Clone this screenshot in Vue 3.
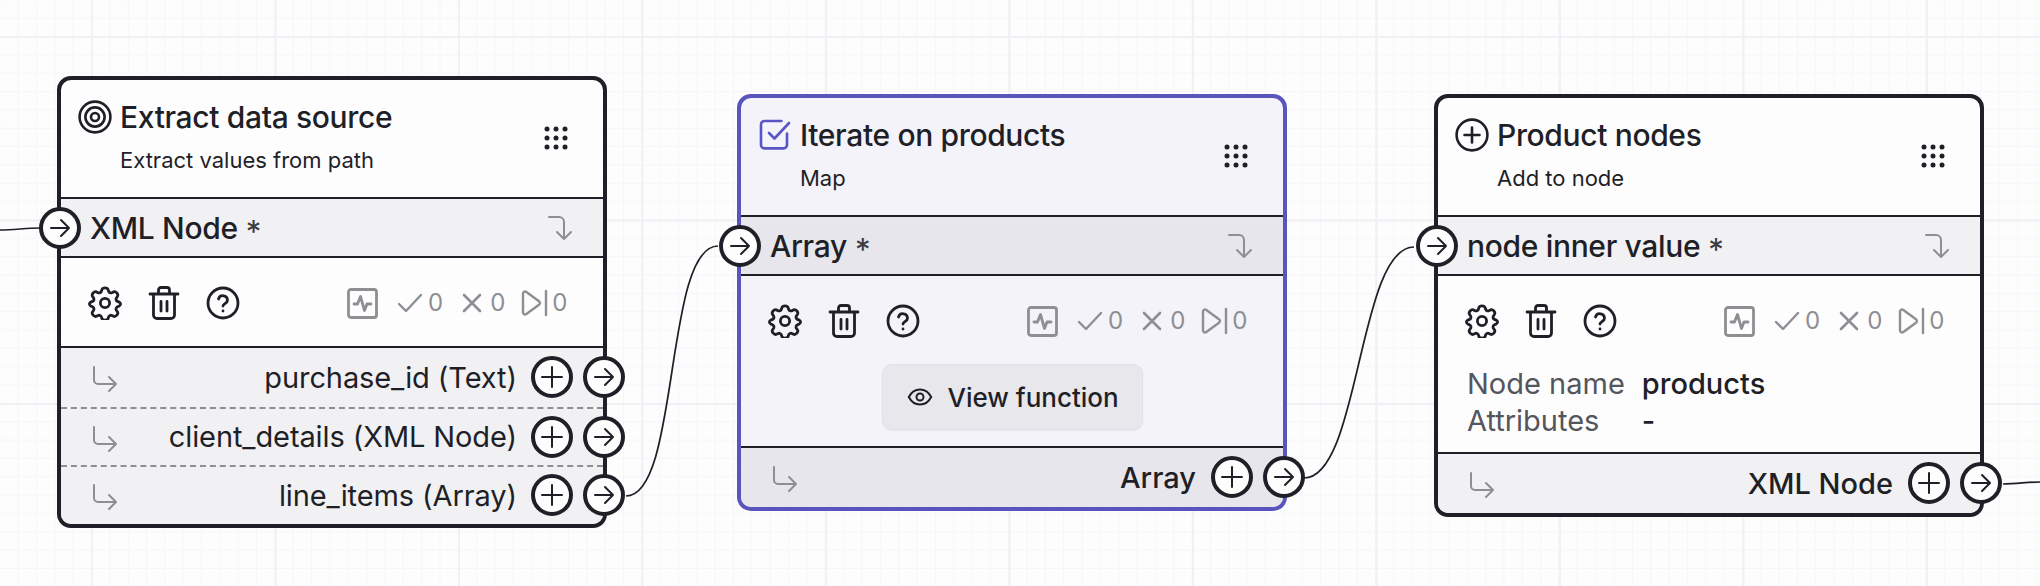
<template>
  <div class="canvas">
    <svg class="edges" width="2040" height="586" fill="none" stroke="#1f1f27" stroke-width="1.7">
      <path d="M0 230C14 230 26 228 40 228" />
      <path d="M626 496C680 496 664 246 718 246" />
      <path d="M1304 478C1360 478 1358 247 1414 247" />
      <path d="M2003 484C2016 484 2028 482 2040 482" />
    </svg>

    <article
      v-for="node in nodes"
      :key="node.title"
      class="node"
      :class="{ selected: node.selected }"
      :style="{ left: node.x + 'px', top: node.y + 'px' }"
    >
      <header class="node-head">
        <span class="type-icon">
          <svg v-if="node.icon === 'target'" width="34" height="34" viewBox="0 0 34 34" fill="none" stroke="#1f1f27" stroke-width="2.6">
            <circle cx="17" cy="17" r="15.4" />
            <circle cx="17" cy="17" r="9.6" />
            <circle cx="17" cy="17" r="4" />
          </svg>
          <svg v-else-if="node.icon === 'check'" width="34" height="34" viewBox="0 0 34 34" fill="none" stroke="#5a55c4" stroke-width="2.6" stroke-linecap="round" stroke-linejoin="round">
            <path d="M29 15.5V27a3.4 3.4 0 0 1-3.4 3.4H6.4A3.4 3.4 0 0 1 3 27V6.4A3.4 3.4 0 0 1 6.4 3h17" />
            <path d="M11 15l5.5 5.5L31 5" />
          </svg>
          <svg v-else width="34" height="34" viewBox="0 0 34 34" fill="none" stroke="#1f1f27" stroke-width="2.6" stroke-linecap="round">
            <circle cx="17" cy="17" r="15.4" />
            <path d="M17 9.5v15M9.5 17h15" />
          </svg>
        </span>
        <div class="head-text">
          <h2>{{ node.title }}</h2>
          <p>{{ node.subtitle }}</p>
        </div>
        <svg class="grip" width="26" height="26" viewBox="0 0 26 26" fill="#1f1f27">
          <template v-for="cy in [4, 13, 22]" :key="cy">
            <circle v-for="cx in [4, 13, 22]" :key="cx" :cx="cx" :cy="cy" r="2.5" />
          </template>
        </svg>
      </header>

      <div class="input-row">
        <span class="port in-port">
          <svg width="26" height="26" viewBox="0 0 26 26" fill="none" stroke="#1f1f27" stroke-width="2" stroke-linecap="round" stroke-linejoin="round"><path d="M4 13h18M14 5l8 8-8 8" /></svg>
        </span>
        <span class="input-name">{{ node.input }}</span>
        <span class="required">*</span>
        <svg class="elbow" width="28" height="28" viewBox="0 0 28 28" fill="none" stroke="#8e8e93" stroke-width="2" stroke-linecap="round" stroke-linejoin="round"><path d="M3 3h10a5 5 0 0 1 5 5v17M11 18l7 7 7-7" /></svg>
      </div>

      <div class="body">
        <div class="toolbar">
          <svg class="tool" width="34" height="34" viewBox="0 0 34 34" fill="none" stroke="#1f1f27" stroke-width="2.8" stroke-linecap="round" stroke-linejoin="round">
            <path d="M13.900 3.600c.8-2.400 5.400-2.400 6.200 0l.5 1.700a2.400 2.400 0 0 0 3.300 1.400l1.600-.8c2.300-1 5.400 2.400 3.900 4.600l-1 1.500a2.400 2.400 0 0 0 1.100 3.400l1.600.7c2 1 2 3 0 4l-1.600.7a2.400 2.400 0 0 0-1.100 3.400l1 1.500c1.500 2.200-1.600 5.600-3.900 4.600l-1.600-.8a2.400 2.400 0 0 0-3.300 1.400l-.5 1.700c-.8 2-5.400 2-6.200 0l-.5-1.700a2.400 2.400 0 0 0-3.300-1.400l-1.600.8c-2.300 1-5.400-2.400-3.900-4.600l1-1.500a2.400 2.400 0 0 0-1.100-3.400l-1.600-.7c-2-1-2-3 0-4l1.600-.7a2.400 2.400 0 0 0 1.100-3.400l-1-1.500c-1.500-2.200 1.600-5.600 3.900-4.600l1.600.8a2.400 2.400 0 0 0 3.300-1.400z" />
            <circle cx="17" cy="17" r="4.600" />
          </svg>
          <svg class="tool" width="34" height="34" viewBox="0 0 34 34" fill="none" stroke="#1f1f27" stroke-width="2.800" stroke-linecap="round" stroke-linejoin="round">
            <path d="M3 8h28M6.500 8v21a3.500 3.500 0 0 0 3.500 3.500h14a3.500 3.500 0 0 0 3.500-3.500V8M11.500 8V4a2.500 2.500 0 0 1 2.500-2.500h6A2.500 2.500 0 0 1 22.500 4v4M14 15.500v9.500M20 15.500v9.500" />
          </svg>
          <svg class="tool" width="34" height="34" viewBox="0 0 34 34" fill="none" stroke="#1f1f27" stroke-width="2.800" stroke-linecap="round" stroke-linejoin="round">
            <circle cx="17" cy="17" r="15" />
            <path d="M12.500 13a4.600 4.600 0 0 1 9 1.200c0 3-4.500 3.600-4.500 5.800M17 25v.1" />
          </svg>
          <div class="stats">
            <svg class="stat-pulse" width="31" height="31" viewBox="0 0 31 31" fill="none" stroke="#8e8e93" stroke-width="2.8" stroke-linecap="round" stroke-linejoin="round">
              <rect x="1.5" y="1.5" width="28" height="28" rx="2.5" />
              <path d="M7 16h3.500l3-7.500 4 14 2.500-6.500h4" />
            </svg>
            <svg class="stat-icon check-icon" width="28" height="22" viewBox="0 0 28 22" fill="none" stroke="#8e8e93" stroke-width="2.400" stroke-linecap="round" stroke-linejoin="round"><path d="M3 12l7 7L25 3" /></svg>
            <span class="count">0</span>
            <svg class="stat-icon x-icon" width="22" height="22" viewBox="0 0 22 22" fill="none" stroke="#8e8e93" stroke-width="2.600" stroke-linecap="round"><path d="M3 3l16 16M19 3L3 19" /></svg>
            <span class="count wide">0</span>
            <svg class="stat-icon play-icon" width="27" height="28" viewBox="0 0 27 28" fill="none" stroke="#8e8e93" stroke-width="2.400" stroke-linecap="round" stroke-linejoin="round"><path d="M2 4.500a2 2 0 0 1 3-1.700l13 9.500a2 2 0 0 1 0 3.400l-13 9.500a2 2 0 0 1-3-1.700zM25 2v24" /></svg>
            <span class="count">0</span>
          </div>
        </div>

        <button v-if="node.action" class="action" type="button">
          <svg width="26" height="26" viewBox="0 0 26 26" fill="none" stroke="#1f1f27" stroke-width="2"><path d="M1.800 13C4.500 7.800 8.500 5.500 13 5.500S21.500 7.800 24.200 13c-2.700 5.200-6.700 7.500-11.200 7.500S4.500 18.200 1.800 13z" /><circle cx="13" cy="13" r="3.500" /></svg>
          {{ node.action }}
        </button>

        <dl v-if="node.details" class="details">
          <template v-for="row in node.details" :key="row.label">
            <dt>{{ row.label }}</dt>
            <dd>{{ row.value }}</dd>
          </template>
        </dl>
      </div>

      <div class="outputs">
        <div v-for="out in node.outputs" :key="out" class="output" :class="{ strong: node.strongOutput }">
          <svg class="hook" width="28" height="28" viewBox="0 0 28 28" fill="none" stroke="#8e8e93" stroke-width="2" stroke-linecap="round" stroke-linejoin="round"><path d="M3 3v13a4 4 0 0 0 4 4h18M18 13l7 7-7 7" /></svg>
          <span class="out-name">{{ out }}</span>
          <span class="port add-port">
            <svg width="26" height="26" viewBox="0 0 26 26" fill="none" stroke="#1f1f27" stroke-width="2" stroke-linecap="round"><path d="M13 3v20M3 13h20" /></svg>
          </span>
          <span class="port out-port">
            <svg width="26" height="26" viewBox="0 0 26 26" fill="none" stroke="#1f1f27" stroke-width="2" stroke-linecap="round" stroke-linejoin="round"><path d="M4 13h18M14 5l8 8-8 8" /></svg>
          </span>
        </div>
      </div>
    </article>
  </div>
</template>

<script setup>
const nodes = [
  {
    title: 'Extract data source',
    subtitle: 'Extract values from path',
    icon: 'target',
    x: 57,
    y: 76,
    input: 'XML Node',
    outputs: ['purchase_id (Text)', 'client_details (XML Node)', 'line_items (Array)'],
  },
  {
    title: 'Iterate on products',
    subtitle: 'Map',
    icon: 'check',
    selected: true,
    x: 737,
    y: 94,
    input: 'Array',
    action: 'View function',
    strongOutput: true,
    outputs: ['Array'],
  },
  {
    title: 'Product nodes',
    subtitle: 'Add to node',
    icon: 'plus',
    x: 1434,
    y: 94,
    input: 'node inner value',
    details: [
      { label: 'Node name', value: 'products' },
      { label: 'Attributes', value: '-' },
    ],
    strongOutput: true,
    outputs: ['XML Node'],
  },
]
</script>

<style>
body {
  margin: 0;
  background: #fdfdfe;
}
</style>

<style scoped>
.canvas {
  position: relative;
  width: 2040px;
  height: 586px;
  overflow: hidden;
  font-family: Inter, "Liberation Sans", sans-serif;
  color: #1f1f27;
  background-color: #fdfdfe;
  background-image:
    linear-gradient(to right, #f0f0f5 2px, transparent 2px),
    linear-gradient(to bottom, #f0f0f5 2px, transparent 2px),
    linear-gradient(to right, #f6f6fa 1px, transparent 1px),
    linear-gradient(to bottom, #f6f6fa 1px, transparent 1px);
  background-size: 183.5px 183.5px, 183.5px 183.5px, 18.35px 18.35px, 18.35px 18.35px;
  background-position: 91px 36px, 91px 36px, 91px 36px, 91px 36px;
}

.edges {
  position: absolute;
  inset: 0;
}

.node {
  position: absolute;
  box-sizing: border-box;
  width: 550px;
  background: #fdfdfe;
  border: 4px solid #1f1f27;
  border-radius: 14px;
}

.node.selected {
  background: #f3f3f9;
  border-color: #5a55bd;
}

.node-head {
  display: flex;
  height: 117px;
  box-sizing: border-box;
  padding: 18px 34px 0 17px;
}

.type-icon {
  display: block;
  width: 34px;
  height: 34px;
  flex: none;
  margin-top: 2px;
}

.head-text {
  flex: 1;
  margin-left: 8px;
}

.head-text h2 {
  margin: 0;
  font-size: 30px;
  line-height: 38px;
  font-weight: 500;
  letter-spacing: -0.35px;
}

.head-text p {
  margin: 9px 0 0;
  font-size: 22px;
  line-height: 30px;
  font-weight: 400;
}

.grip {
  flex: none;
  margin-top: 27px;
}

.input-row {
  position: relative;
  display: flex;
  align-items: center;
  height: 61px;
  box-sizing: border-box;
  padding: 0 29px 0 29px;
  background: #f1f1f3;
  border-top: 2px solid #1f1f27;
  border-bottom: 2px solid #1f1f27;
}

.selected .input-row,
.selected .outputs {
  background: #e7e6ec;
}

.input-name {
  font-size: 30px;
  font-weight: 500;
  letter-spacing: -0.33px;
}

.required {
  margin: 8px 0 0 8px;
  font-size: 31px;
  color: #3a3a42;
}

.elbow {
  margin-left: auto;
}

.port {
  display: flex;
  align-items: center;
  justify-content: center;
  box-sizing: border-box;
  flex: none;
  width: 42px;
  height: 42px;
  background: #fdfdfe;
  border: 4px solid #1f1f27;
  border-radius: 50%;
}

.in-port {
  position: absolute;
  left: -22px;
  top: 8px;
}

.body {
  padding: 28px 27px 0;
}

.toolbar {
  display: flex;
  align-items: center;
  height: 34px;
  padding-bottom: 26px;
}

.tool {
  flex: none;
  margin-right: 25px;
}

.stats {
  display: flex;
  align-items: center;
  margin-left: auto;
  margin-right: 8.5px;
  color: #8e8e93;
  font-size: 24px;
}

.stat-icon {
  flex: none;
}

.stat-icon.check-icon {
  margin-left: 17.5px;
}

.stat-icon.x-icon {
  margin-left: 17.5px;
}

.stat-icon.play-icon {
  margin-left: 15.5px;
}

.count {
  margin-left: 4.5px;
  line-height: 30px;
}

.count.wide {
  margin-left: 7.5px;
}

.action {
  display: flex;
  align-items: center;
  gap: 15px;
  box-sizing: border-box;
  width: 261px;
  height: 66px;
  margin: 0 auto 16px;
  padding: 0 0 0 24px;
  font: 500 26px Inter, "Liberation Sans", sans-serif;
  color: #1f1f27;
  background: #e8e7ec;
  border: 1px solid #e2e1e8;
  border-radius: 10px;
  box-shadow: 0 1px 2px rgba(0, 0, 0, 0.06);
}

.details {
  display: grid;
  grid-template-columns: max-content 1fr;
  column-gap: 17px;
  margin: 2px 0 13px 2px;
  font-size: 29px;
  line-height: 36.500px;
}

.details dt {
  color: #55555c;
}

.details dd {
  margin: 0;
  font-weight: 500;
}

.outputs {
  background: #f1f1f3;
  border-top: 2px solid #1f1f27;
  border-radius: 0 0 10px 10px;
}

.output {
  display: flex;
  align-items: center;
  height: 58.5px;
  box-sizing: border-box;
  padding: 0 0 0 30px;
  font-size: 29px;
  font-weight: 400;
  letter-spacing: -0.1px;
}

.output + .output {
  border-top: 2px dashed #8e8e93;
}

.output.strong {
  font-weight: 500;
  letter-spacing: 0;
}

.hook {
  flex: none;
  margin-top: 2px;
}

.out-name {
  flex: 1;
  text-align: right;
}

.add-port {
  margin-left: 14px;
}

.strong .add-port {
  margin-left: 15px;
}

.out-port {
  margin-left: 10px;
  margin-right: -22px;
}
</style>
